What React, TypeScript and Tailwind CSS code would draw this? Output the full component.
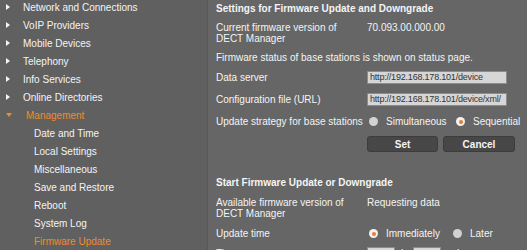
import React from 'react';

const menu = [
  'Network and Connections',
  'VoIP Providers',
  'Mobile Devices',
  'Telephony',
  'Info Services',
  'Online Directories',
];

const subMenu = [
  'Date and Time',
  'Local Settings',
  'Miscellaneous',
  'Save and Restore',
  'Reboot',
  'System Log',
];

const Radio: React.FC<{ checked?: boolean; label: string }> = ({ checked, label }) => (
  <span className="flex items-center">
    <span
      className={`flex h-[9px] w-[9px] items-center justify-center rounded-full ${
        checked ? 'bg-[#f2f2f2]' : 'bg-[#d2d2d2]'
      }`}
    >
      {checked && <span className="h-[4px] w-[4px] rounded-full bg-[#f07a2a]" />}
    </span>
    <span className="ml-[8px]">{label}</span>
  </span>
);

const TextInput: React.FC<{ value: string; className?: string }> = ({ value, className }) => (
  <div
    className={`h-[13px] border border-[#8c8c8c] bg-[#d6d6d6] pl-[2px] text-[9px] leading-[11px] tracking-[-0.2px] text-[#333] overflow-hidden whitespace-nowrap ${className ?? ''}`}
  >
    {value}
  </div>
);

export default function App() {
  return (
    <div className="flex h-[250px] w-[527px] overflow-hidden bg-[#666666] font-['Liberation_Sans',Arial,sans-serif] text-[10px] text-[#f4f4f4]">
      {/* Sidebar */}
      <div className="w-[208px] shrink-0 border-r border-[#585858] bg-[#606060]">
        <ul className="-mt-[2px]">
          {menu.map((item) => (
            <li key={item} className="flex h-[18px] items-center">
              <span className="ml-[6px] h-0 w-0 border-y-[3px] border-l-[4px] border-y-transparent border-l-[#f4f4f4]" />
              <span className="ml-[13px]">{item}</span>
            </li>
          ))}
          <li className="flex h-[18px] items-center text-[#f08a2c]">
            <span className="ml-[6px] h-0 w-0 border-x-[3px] border-t-[4px] border-x-transparent border-t-[#f08a2c]" />
            <span className="ml-[14px]">Management</span>
          </li>
          {subMenu.map((item) => (
            <li key={item} className="flex h-[18px] items-center pl-[34px]">
              {item}
            </li>
          ))}
          <li className="flex h-[18px] items-center pl-[34px] text-[#f08a2c]">Firmware Update</li>
        </ul>
      </div>

      {/* Content */}
      <div className="flex-1 pl-[8px]">
        <div className="h-[18px] font-bold leading-[18px]">Settings for Firmware Update and Downgrade</div>

        <div className="mt-[4px] grid grid-cols-[151px_1fr] leading-[11px]">
          <div>
            Current firmware version of
            <br />
            DECT Manager
          </div>
          <div>70.093.00.000.00</div>
        </div>

        <div className="mt-[5px] h-[18px] leading-[18px]">
          Firmware status of base stations is shown on status page.
        </div>

        <div className="mt-[3px] grid h-[14px] grid-cols-[151px_1fr] items-center">
          <div>Data server</div>
          <TextInput value="http://192.168.178.101/device" className="w-[140px]" />
        </div>

        <div className="mt-[8px] grid h-[14px] grid-cols-[151px_1fr] items-center">
          <div>Configuration file (URL)</div>
          <TextInput value="http://192.168.178.101/device/xml/" className="w-[140px]" />
        </div>

        <div className="mt-[8px] grid h-[14px] grid-cols-[151px_1fr] items-center">
          <div>Update strategy for base stations</div>
          <div className="flex pl-[2px]">
            <div className="w-[87px]">
              <Radio label="Simultaneous" />
            </div>
            <Radio checked label="Sequential" />
          </div>
        </div>

        <div className="mt-[8px] grid grid-cols-[151px_1fr]">
          <div />
          <div className="flex gap-[5px]">
            <button className="h-[16px] w-[71px] rounded-[3px] border border-[#3c3c3c] bg-[#474747] text-[10px] font-bold text-[#f4f4f4]">
              Set
            </button>
            <button className="h-[16px] w-[72px] rounded-[3px] border border-[#3c3c3c] bg-[#474747] text-[10px] font-bold text-[#f4f4f4]">
              Cancel
            </button>
          </div>
        </div>

        <div className="mt-[22px] h-[18px] font-bold leading-[18px]">Start Firmware Update or Downgrade</div>

        <div className="mt-[5px] grid grid-cols-[151px_1fr] leading-[11px]">
          <div>
            Available firmware version of
            <br />
            DECT Manager
          </div>
          <div>Requesting data</div>
        </div>

        <div className="mt-[7px] grid h-[14px] grid-cols-[151px_1fr] items-center">
          <div>Update time</div>
          <div className="flex pl-[2px]">
            <div className="w-[84px]">
              <Radio checked label="Immediately" />
            </div>
            <Radio label="Later" />
          </div>
        </div>

        <div className="mt-[6px] grid h-[14px] grid-cols-[151px_1fr] items-center">
          <div>Time</div>
          <div className="flex items-center">
            <TextInput value="" className="w-[28px]" />
            <span className="mx-[6px]">h</span>
            <TextInput value="" className="w-[28px]" />
            <span className="ml-[8px]">min</span>
          </div>
        </div>
      </div>
    </div>
  );
}
